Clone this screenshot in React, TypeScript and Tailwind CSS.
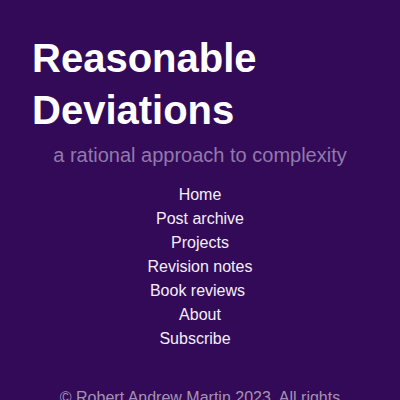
export default function App() {
  const links = ["Home", "Post archive", "Projects", "Revision notes"];

  return (
    <div className="h-[400px] overflow-hidden bg-[#330a57] px-[32px] pt-[32px] font-['Liberation_Sans',Arial,sans-serif] text-white">
      <header>
        <h1 className="text-[40px] font-bold leading-[52px]">
          Reasonable
          <br />
          Deviations
        </h1>
        <p className="mt-[4px] text-center text-[20px] leading-[30px] text-[#9179ad]">
          a rational approach to complexity
        </p>
      </header>

      <nav className="mt-[13px] flex flex-col items-center text-[16px] leading-[24px] text-[#f4eefa]">
        {links.map((l) => (
          <a key={l} href="#">
            {l}
          </a>
        ))}
        <a href="#" className="pr-[5px]">
          Book reviews
        </a>
        <a href="#">About</a>
        <a href="#" className="pr-[10px]">
          Subscribe
        </a>
      </nav>

      <footer className="mt-[35px] text-center text-[16px] leading-[24px] text-[#a394b3]">
        © Robert Andrew Martin 2023. All rights reserved.
      </footer>
    </div>
  );
}
